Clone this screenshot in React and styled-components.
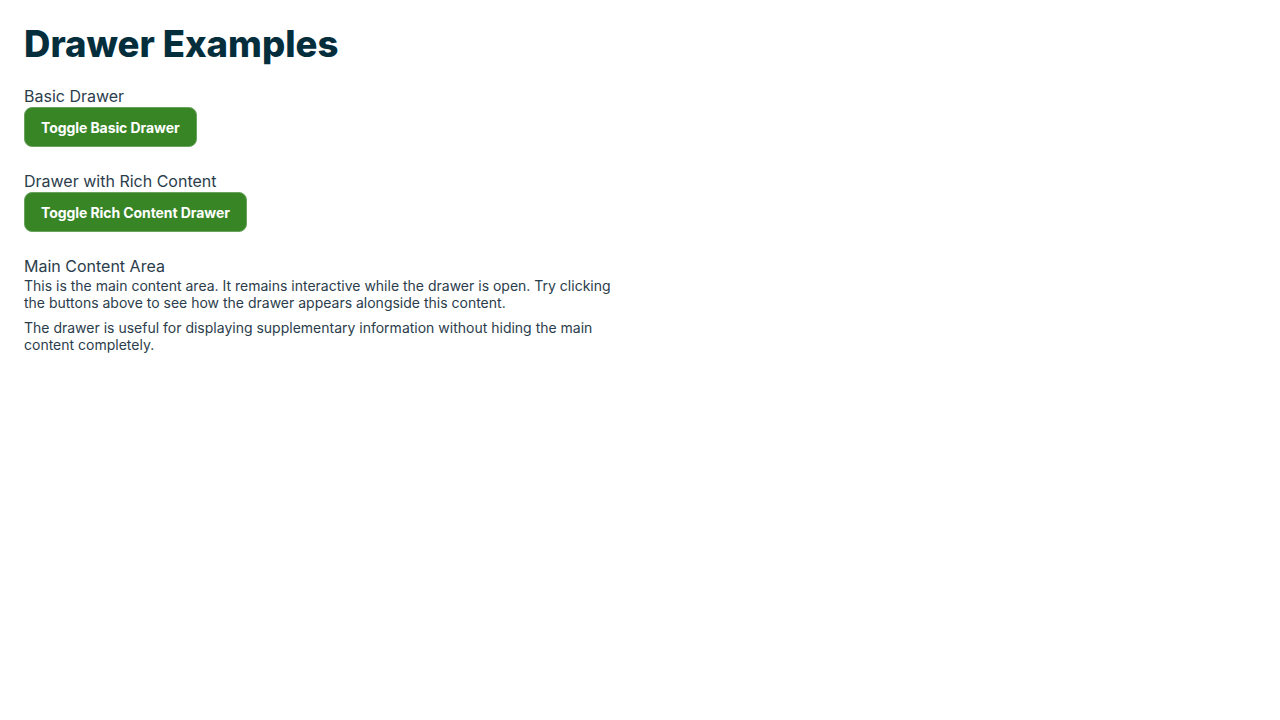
import React, { useState } from 'react';
import styled, { createGlobalStyle } from 'styled-components';

const GlobalStyle = createGlobalStyle`
  body {
    margin: 0;
    background: #ffffff;
    font-family: 'Inter', 'Liberation Sans', sans-serif;
  }
`;

const Page = styled.div`
  padding: 20px 24px;
  display: flex;
  flex-direction: column;
`;

const Title = styled.h1`
  margin: 0 0 18px;
  font-size: 36.5px;
  line-height: 48px;
  font-weight: 800;
  color: #052e3d;
`;

const Section = styled.section`
  display: flex;
  flex-direction: column;
  align-items: flex-start;
  margin-bottom: 24px;
`;

const Label = styled.div`
  font-size: 16px;
  line-height: 21px;
  color: #2b3d4c;
`;

const ToggleButton = styled.button`
  height: 40px;
  padding: 0 16px;
  border: 1px solid #6aa35e;
  border-radius: 8px;
  background-color: #388526;
  color: #ffffff;
  font-family: 'Inter', 'Liberation Sans', sans-serif;
  font-size: 14px;
  font-weight: 700;
  letter-spacing: -0.08px;
  cursor: pointer;
`;

const Text = styled.p`
  margin: 0 0 8px;
  max-width: 600px;
  font-size: 14px;
  line-height: 17px;
  color: #2b3d4c;
`;

export default function App() {
  const [openDrawer, setOpenDrawer] = useState(null);

  const toggle = name => setOpenDrawer(openDrawer === name ? null : name);

  return (
    <>
      <GlobalStyle />
      <Page>
        <Title>Drawer Examples</Title>
        <Section>
          <Label>Basic Drawer</Label>
          <ToggleButton onClick={() => toggle('basic')}>Toggle Basic Drawer</ToggleButton>
        </Section>
        <Section>
          <Label>Drawer with Rich Content</Label>
          <ToggleButton onClick={() => toggle('rich')}>Toggle Rich Content Drawer</ToggleButton>
        </Section>
        <Section>
          <Label>Main Content Area</Label>
          <Text>
            This is the main content area. It remains interactive while the drawer is open. Try clicking
            the buttons above to see how the drawer appears alongside this content.
          </Text>
          <Text>
            The drawer is useful for displaying supplementary information without hiding the main
            content completely.
          </Text>
        </Section>
      </Page>
    </>
  );
}
